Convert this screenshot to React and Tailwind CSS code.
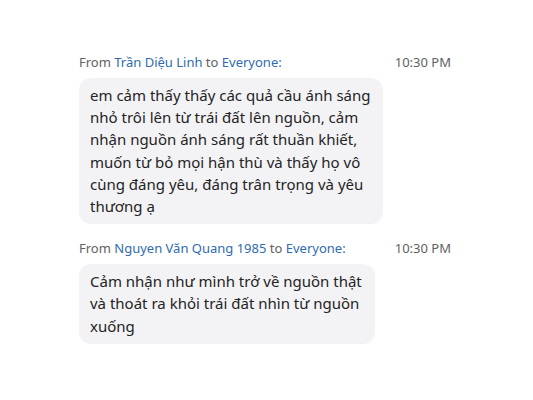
import React from 'react';

const messages = [
  {
    from: 'Trần Diệu Linh',
    to: 'Everyone',
    time: '10:30 PM',
    bubbleWidth: 'max-w-[304px]',
    text: 'em cảm thấy thấy các quả cầu ánh sáng nhỏ trôi lên từ trái đất lên nguồn, cảm nhận nguồn ánh sáng rất thuần khiết, muốn từ bỏ mọi hận thù và thấy họ vô cùng đáng yêu, đáng trân trọng và yêu thương ạ',
  },
  {
    from: 'Nguyen Văn Quang 1985',
    to: 'Everyone',
    time: '10:30 PM',
    bubbleWidth: 'max-w-[296px]',
    text: 'Cảm nhận như mình trở về nguồn thật và thoát ra khỏi trái đất nhìn từ nguồn xuống',
  },
];

const ChatMessage = ({ from, to, time, text, bubbleWidth }) => {
  return (
    <div className="flex flex-col">
      <div className="flex items-center justify-between text-[13px] leading-[20px] text-[#616161]">
        <div>
          From <span className="text-[#2f6cb0]">{from}</span> to{' '}
          <span className="text-[#2f6cb0]">{to}:</span>
        </div>
        <div className="pr-[1px]">{time}</div>
      </div>
      <div
        className={`mt-[6px] w-fit ${bubbleWidth} rounded-[12px] bg-[#f3f3f6] pl-[11px] pr-[10px] pt-[6px] pb-[7px] text-[15px] leading-[22.2px] text-[#242424]`}
      >
        {text}
      </div>
    </div>
  );
};

export default function App() {
  return (
    <div
      className="min-h-[400px] w-[533px] bg-white pl-[79px] pr-[81px] pt-[52px]"
      style={{ fontFamily: '"Segoe UI", "Noto Sans", "Open Sans", sans-serif' }}
    >
      <div className="flex flex-col gap-[14px]">
        {messages.map((m, i) => (
          <ChatMessage key={i} {...m} />
        ))}
      </div>
    </div>
  );
}
